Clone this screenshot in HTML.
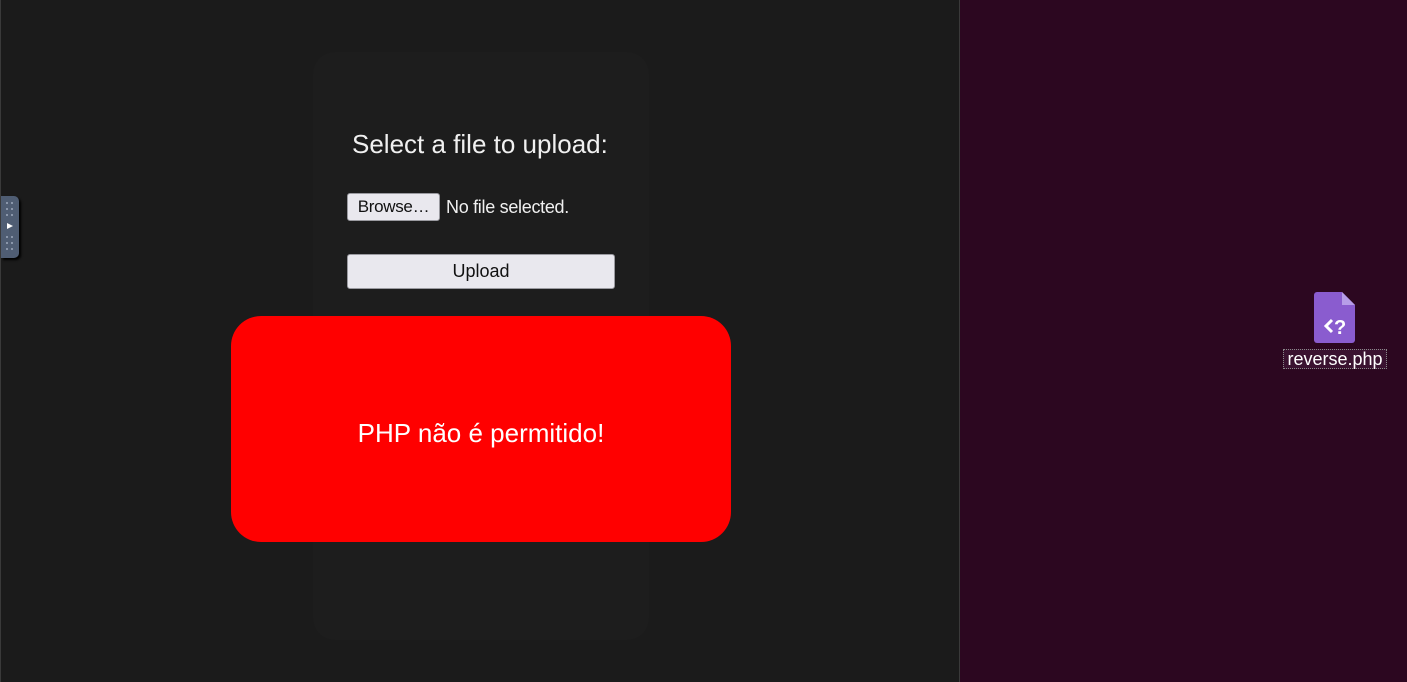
<!DOCTYPE html>
<html><head><meta charset="utf-8"><style>
html,body{margin:0;padding:0;width:1407px;height:682px;overflow:hidden;background:#2c0720;font-family:"Liberation Sans",sans-serif}
#left{position:absolute;left:0;top:0;width:960px;height:682px;background:#1b1b1b;border-left:1px solid #3a3a3a;border-right:1px solid #3a3a3a;box-sizing:border-box}
#card{position:absolute;left:312px;top:52px;width:336px;height:588px;background:#1d1d1d;border-radius:22px}
.t{position:absolute;color:#f0f0f0;white-space:nowrap}
.btn{position:absolute;background:#e9e8ee;border:1px solid #9a9aa0;border-radius:3px;color:#111;font-size:16px;text-align:center;box-sizing:border-box}
#red{position:absolute;left:230px;top:316px;width:500px;height:226px;background:#ff0000;border-radius:30px;color:#fff;font-size:26px;text-align:center;line-height:226px;box-sizing:border-box;padding-top:4px}
#handle{position:absolute;left:0;top:196px;width:18px;height:62px;background:#4f5d73;border-radius:0 5px 5px 0;box-shadow:2px 2px 2px #000}
</style></head><body>
<div id="left">
<div id="card"></div>
<div class="t" style="left:351px;top:129px;font-size:26px">Select a file to upload:</div>
<div class="btn" style="left:346px;top:193px;width:93px;height:28px;line-height:26px;font-size:17px;letter-spacing:-0.3px">Browse…</div>
<div class="t" style="left:445px;top:197px;font-size:18px;letter-spacing:-0.3px">No file selected.</div>
<div class="btn" style="left:346px;top:254px;width:268px;height:35px;line-height:33px;font-size:18px">Upload</div>
<div id="red">PHP não é permitido!</div>
<div id="handle">
<svg width="18" height="62"><g fill="#8a96aa"><rect x="5" y="6" width="2" height="2"/><rect x="10" y="6" width="2" height="2"/><rect x="5" y="12" width="2" height="2"/><rect x="10" y="12" width="2" height="2"/><rect x="5" y="18" width="2" height="2"/><rect x="10" y="18" width="2" height="2"/><rect x="5" y="40" width="2" height="2"/><rect x="10" y="40" width="2" height="2"/><rect x="5" y="46" width="2" height="2"/><rect x="10" y="46" width="2" height="2"/><rect x="5" y="52" width="2" height="2"/><rect x="10" y="52" width="2" height="2"/></g><path d="M6 27 L12 30 L6 33Z" fill="#fff"/></svg>
</div>
</div>
<svg style="position:absolute;left:1314px;top:292px" width="42" height="52"><path d="M3 0 H28 L41 13 V48 a3 3 0 0 1 -3 3 H3 a3 3 0 0 1 -3 -3 V3 a3 3 0 0 1 3 -3Z" fill="#8a5ccf"/><path d="M28 0 V13 H41Z" fill="#b79de8"/><path d="M18 28 L12 34 L18 40" stroke="#fff" stroke-width="3" fill="none"/><text x="20" y="42" fill="#fff" font-size="20" font-weight="bold" font-family="Liberation Sans">?</text></svg>
<div style="position:absolute;left:1283px;top:349px;width:104px;height:20px;border:1px dotted #888;box-sizing:border-box;background:#3a1230;color:#fff;font-size:18px;text-align:center;line-height:18px;white-space:nowrap">reverse.php</div>
</body></html>
